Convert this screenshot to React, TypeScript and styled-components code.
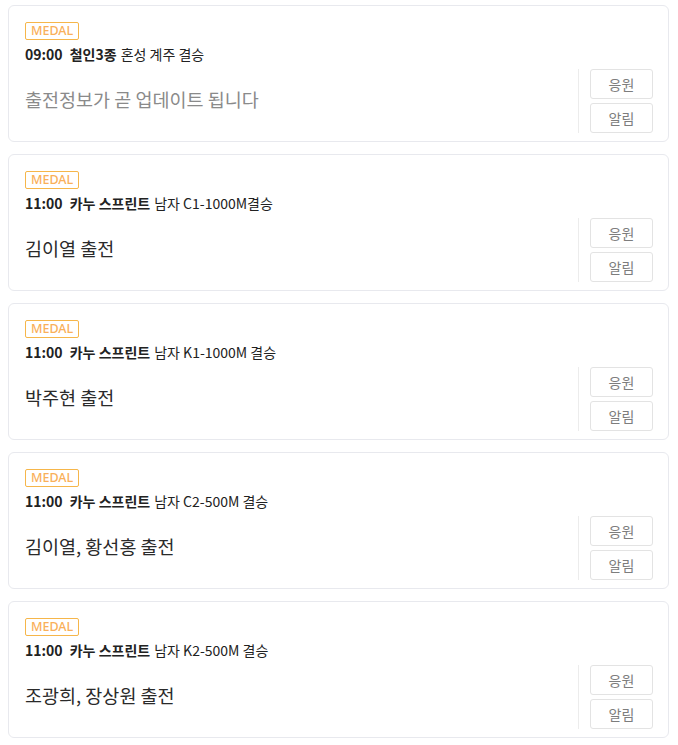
import styled, { createGlobalStyle } from 'styled-components'

const Global = createGlobalStyle`
  body {
    margin: 0;
    padding: 5px 9px 0 8px;
    background: #fff;
    font-family: "Noto Sans CJK KR", "Noto Sans", sans-serif;
  }
`

const List = styled.div`
  display: flex;
  flex-direction: column;
  gap: 12px;
`

const Card = styled.div`
  display: flex;
  height: 137px;
  box-sizing: border-box;
  padding: 16px 15px 8px 16px;
  border: 1px solid #e8e9ee;
  border-radius: 6px;
  background: #fff;
`

const Info = styled.div`
  flex: 1;
  display: flex;
  flex-direction: column;
`

const Badge = styled.span`
  align-self: flex-start;
  box-sizing: border-box;
  height: 18px;
  padding: 0 5px;
  border: 1px solid #f6b64a;
  border-radius: 2px;
  color: #f9b05a;
  font-size: 12.5px;
  line-height: 16px;
  font-weight: 500;
  font-family: "Noto Sans", sans-serif;
`

const Title = styled.div`
  margin-top: 5px;
  font-size: 14px;
  line-height: 19px;
  color: #222;

  b {
    font-weight: 700;
    margin-right: 4px;
  }
`

const Entry = styled.div<{ $pending?: boolean }>`
  margin-top: 22px;
  font-size: 18.5px;
  line-height: 26px;
  color: ${p => (p.$pending ? '#8a8a8a' : '#2a2a2a')};
`

const Actions = styled.div`
  align-self: flex-end;
  display: flex;
  padding-left: 11px;
  border-left: 1px solid #ececec;
`

const ButtonStack = styled.div`
  display: flex;
  flex-direction: column;
  gap: 4px;
`

const Action = styled.button`
  width: 63px;
  height: 30px;
  box-sizing: border-box;
  padding: 0;
  border: 1px solid #e3e3e3;
  border-radius: 3px;
  background: #fff;
  color: #7d7d7d;
  font-size: 14px;
  font-family: "Noto Sans CJK KR", sans-serif;
`

type Game = {
  time: string
  sport: string
  event: string
  entry: string
  pending?: boolean
}

const games: Game[] = [
  { time: '09:00', sport: '철인3종', event: '혼성 계주 결승', entry: '출전정보가 곧 업데이트 됩니다', pending: true },
  { time: '11:00', sport: '카누 스프린트', event: '남자 C1-1000M결승', entry: '김이열 출전' },
  { time: '11:00', sport: '카누 스프린트', event: '남자 K1-1000M 결승', entry: '박주현 출전' },
  { time: '11:00', sport: '카누 스프린트', event: '남자 C2-500M 결승', entry: '김이열, 황선홍 출전' },
  { time: '11:00', sport: '카누 스프린트', event: '남자 K2-500M 결승', entry: '조광희, 장상원 출전' },
]

export default function App() {
  return (
    <>
      <Global />
      <List>
        {games.map((g, i) => (
          <Card key={i}>
            <Info>
              <Badge>MEDAL</Badge>
              <Title>
                <b>{g.time}</b> <b>{g.sport}</b>{g.event}
              </Title>
              <Entry $pending={g.pending}>{g.entry}</Entry>
            </Info>
            <Actions>
              <ButtonStack>
                <Action>응원</Action>
                <Action>알림</Action>
              </ButtonStack>
            </Actions>
          </Card>
        ))}
      </List>
    </>
  )
}
